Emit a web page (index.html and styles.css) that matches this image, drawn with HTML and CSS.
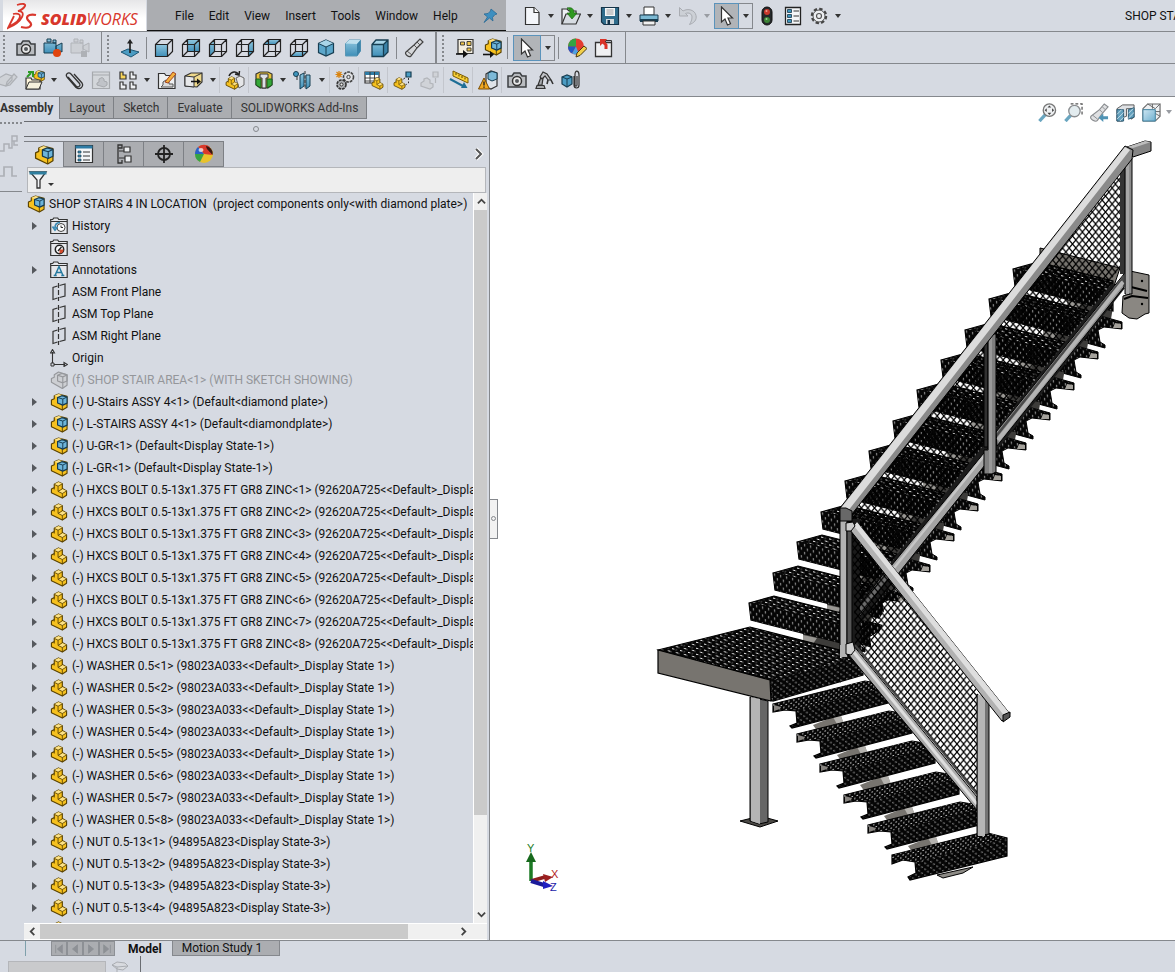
FILE: index.html
```html
<!DOCTYPE html>
<html lang="en">
<head>
<meta charset="utf-8">
<meta name="viewport" content="width=device-width, initial-scale=1">
<title>SOLIDWORKS</title>
<link rel="stylesheet" href="styles.css">
</head>
<body>
<svg class="sprite" aria-hidden="true">
  <defs>
    <linearGradient id="g-blue" x1="0" y1="0" x2="0" y2="1"><stop offset="0" stop-color="#8fc6de"/><stop offset="1" stop-color="#3f8fb8"/></linearGradient>
    <linearGradient id="g-pale" x1="0" y1="0" x2="1" y2="1"><stop offset="0" stop-color="#cfe6f2"/><stop offset="1" stop-color="#6fb0cf"/></linearGradient>
    <g id="wire"><path d="M1.5 6.500h12v12h-12zM6.500 1.500h12v12h-12zM1.500 6.500l5-5M13.500 6.500l5-5M13.500 18.500l5-5M1.500 18.500l5-5" fill="none" stroke="#222" stroke-width="1.200"/></g>
    <g id="lshape"><path d="M1 8.500L4 7V3.500L8.500 1l4 2v5l4.500 2.500V15l-4.500 3L1 12.500z" fill="#f6c11f" stroke="#5b4300" stroke-width="1.200" stroke-linejoin="round"/><path d="M4 3.500L8.500 1l4 2L8 5.500zM8 11l4.500-2.500 4.500 2-4.500 2.700z" fill="#fde286"/><path d="M4 3.500l4 2 4.500-2.500M8 5.500V11l4.500 2.200L17 10.500M8 11l4.500-2.700M12.500 13.200V18M4 7v2" fill="none" stroke="#5b4300" stroke-width=".9"/></g>
    <g id="cam"><path d="M1 6h4l2-3h6l2 3h4v11H1z" fill="#b9bcc0" stroke="#3c3f42" stroke-width="1.500"/><circle cx="10" cy="11" r="4.500" fill="#e8e8e8" stroke="#333" stroke-width="1.500"/><circle cx="10" cy="11" r="2" fill="#55595d"/></g>
  </defs>
  <symbol id="i-part" viewBox="0 0 18 19"><use href="#lshape"/></symbol>
  <symbol id="i-asm" viewBox="0 0 18 19"><path d="M1 7.500L4 6V3L8.500 1l9 2.500V15l-5 3L1 12.500z" fill="#f6c11f" stroke="#5b4300" stroke-width="1.200" stroke-linejoin="round"/><path d="M4 3l4.500-2 4 1.200L8 4.500z" fill="#fde286"/><path d="M12.500 12.500V18" stroke="#5b4300" stroke-width="1"/><path d="M7.500 4.700L12 2.800l5.500 1.400v6.500L13 12.800l-5.500-2.300z" fill="#6db5da" stroke="#143a52" stroke-width="1.200" stroke-linejoin="round"/><path d="M7.500 4.700l5.500 1.700 4.500-2.200M13 6.400v6" fill="none" stroke="#143a52"/></symbol>
  <symbol id="i-asm-off" viewBox="0 0 18 19"><g fill="#cdcfd3" stroke="#96989c" stroke-width="1.200" stroke-linejoin="round"><path d="M1 8l3-1.500V4l4.500-3 9 3v11l-5 3.500L1 12z"/><path d="M7.500 4.500L12 2.500l5.500 1.500v6.500L13 12.500l-5.500-2zM7.500 4.500l5.500 1.700 4.500-2M13 6.200v12" fill="none"/></g></symbol>
  <symbol id="i-history" viewBox="0 0 18 18"><path d="M.7 16.500v-14h2l1-1.500h4l1 1.500h8.500v14z" fill="#e6e8ec" stroke="#333" stroke-width="1.200"/><path d="M1 4.500h16" stroke="#333"/><circle cx="11" cy="10.500" r="4" fill="#fff" stroke="#444"/><path d="M11 8.500v2h2" fill="none" stroke="#333"/><path d="M10 5.500C6 5.500 5 8 5 11M2.500 9.500L5 13l2.500-3" fill="none" stroke="#3a8ab4" stroke-width="1.700"/></symbol>
  <symbol id="i-sensors" viewBox="0 0 18 18"><path d="M.7 16.500v-14h2l1-1.500h4l1 1.500h8.500v14z" fill="#e6e8ec" stroke="#333" stroke-width="1.200"/><path d="M1 4.500h16" stroke="#333"/><circle cx="9.500" cy="10.500" r="4.200" fill="#fff" stroke="#222" stroke-width="1.500"/><path d="M9.500 10.500l4 0a4 4 0 0 1-4 4z" fill="#d04a2c"/><path d="M8 12l3.500-4" stroke="#222" stroke-width="1.300"/></symbol>
  <symbol id="i-notes" viewBox="0 0 18 18"><path d="M.7 16.500v-14h2l1-1.500h4l1 1.500h8.500v14z" fill="#e6e8ec" stroke="#333" stroke-width="1.200"/><path d="M1 4.500h16" stroke="#333"/><path d="M5 14.500l4-9 4 9M6.500 11.500h5M3.700 14.500h3M11.300 14.500h3" fill="none" stroke="#24799f" stroke-width="1.500"/></symbol>
  <symbol id="i-plane" viewBox="0 0 18 18"><path d="M7.500 3L3 4.500v12L7.500 15M9.500 2.500L15 1v12l-5.500 1.500" fill="none" stroke="#333" stroke-width="1.200"/><path d="M8.500 0v18" stroke="#333" stroke-width="1.200" stroke-dasharray="5 2"/></symbol>
  <symbol id="i-origin" viewBox="0 0 18 18"><path d="M2.500 3v12M4 15.500h11M.5 4l2-3.500 2 3.500zM14 13.500l3.500 2-3.500 2z" fill="none" stroke="#333" stroke-width="1.100"/><path d="M1 14h3v3H1z" fill="#d6dae2" stroke="#333"/></symbol>
  <symbol id="i-new" viewBox="0 0 20 20"><path d="M3.500 1.500h8.500l5 5v12H3.500z" fill="#f4f6fa" stroke="#333" stroke-width="1.200"/><path d="M12 1.500v5h5" fill="#fff" stroke="#333" stroke-width="1.200"/></symbol>
  <symbol id="i-open" viewBox="0 0 20 20"><path d="M1 18V3h5l2 2h7v3" fill="#eef0f4" stroke="#333" stroke-width="1.200"/><path d="M1 18L5 8h14.500L15 18z" fill="#d7dce2" stroke="#333" stroke-width="1.200"/><path d="M6 2c5-1 7 1 7 5h3l-5 6-5-6h3c0-3-1-4-3-5z" fill="#2f9a20" stroke="#1a6610" stroke-width=".7"/></symbol>
  <symbol id="i-save" viewBox="0 0 20 20"><path d="M1.500 1.500h17v17H4l-2.500-2.500z" fill="#2f6c8c" stroke="#153348" stroke-width="1.200"/><path d="M5 2h10v8H5z" fill="#f3f6f8"/><path d="M6.500 4h7M6.500 6h7M6.500 8h7" stroke="#888" stroke-width=".8"/><path d="M6 13h8v5H6z" fill="#cfd8dd"/><path d="M7.500 14h2.500v4H7.500z" fill="#153348"/></symbol>
  <symbol id="i-print" viewBox="0 0 20 20"><path d="M5 1h10v8H5z" fill="#fff" stroke="#333"/><path d="M1 9h18v6H1z" fill="#7cb9d3" stroke="#1b3d50"/><path d="M1 13h18v3H1z" fill="#173e52"/><path d="M4 15h12v4H4z" fill="#f1f1f1" stroke="#333"/></symbol>
  <symbol id="i-undo" viewBox="0 0 20 20"><path d="M1.500 1.500v8.500H10L7.500 7.500C11 6 14 8 14 11s-1 5-2.500 7.500C16 17 19 14 18 9.500 17 4 10 2 5 5z" fill="#ccd0d6" stroke="#a9acb2" stroke-width="1"/></symbol>
  <symbol id="i-cursor" viewBox="0 0 20 20"><path d="M4.500 1v15l3.500-3 2.500 6 3-1.300-2.500-5.700h4.500z" fill="#fff" stroke="#333" stroke-width="1.200"/></symbol>
  <symbol id="i-light" viewBox="0 0 20 20"><rect x="5" y="1" width="10" height="18" rx="5" fill="#25282a" stroke="#111"/><circle cx="10" cy="6" r="3" fill="#c8382c"/><circle cx="10" cy="14" r="3" fill="#3c8436"/><circle cx="9.500" cy="5" r="1" fill="#f29c90"/><circle cx="9.500" cy="13" r="1" fill="#a0d49a"/></symbol>
  <symbol id="i-options" viewBox="0 0 20 20"><path d="M2.500 1.500h15v17h-15z" fill="#f4f6f8" stroke="#222" stroke-width="1.300"/><path d="M4.500 3.500h4v3h-4zM4.500 8.500h4v3h-4zM4.500 13.500h4v3h-4z" fill="#3f96bd" stroke="#153348" stroke-width=".8"/><path d="M10.500 5H16M10.500 10H16M10.500 15H16" stroke="#333" stroke-width="1.200"/></symbol>
  <symbol id="i-gear" viewBox="0 0 20 20"><circle cx="10" cy="10" r="7" fill="none" stroke="#444" stroke-width="2.500" stroke-dasharray="3.300 2.200"/><circle cx="10" cy="10" r="6" fill="#eceef1" stroke="#555"/><circle cx="10" cy="10" r="2.500" fill="none" stroke="#555" stroke-width="1.200"/></symbol>
  <symbol id="i-pin" viewBox="0 0 16 16"><path d="M9 1l6 5-2 .5-2.500 3 .5 3.500-3.500-3L2 14.500 5.500 9 2 6l4-.5L8.500 3z" fill="#3d8fc0" stroke="#2a6a94" stroke-width=".8"/></symbol>
  <symbol id="i-camera" viewBox="0 0 20 20"><use href="#cam"/></symbol>
  <symbol id="i-record" viewBox="0 0 20 20"><path d="M4 1h4v3H4zM10 2h3v3h-3zM1 5h12v10H1zM13 8l6-3v9l-6-3z" fill="url(#g-blue)" stroke="#173e52"/><circle cx="14" cy="15" r="4" fill="#e0440e"/></symbol>
  <symbol id="i-record-off" viewBox="0 0 20 20"><path d="M4 1h4v3H4zM10 2h3v3h-3zM1 5h12v10H1zM13 8l6-3v9l-6-3z" fill="#cdd0d5" stroke="#b0b3b8"/><path d="M11 13h6v6h-6z" fill="#aeb1b6"/></symbol>
  <symbol id="i-normal" viewBox="0 0 20 20"><path d="M1 14l7-3 11 3-8 5z" fill="#4b9cc3" stroke="#1d5674"/><path d="M10 15V3" stroke="#222" stroke-width="1.700"/><path d="M7 5.500L10 1l3 4.500z" fill="#222"/></symbol>
  <symbol id="i-front" viewBox="0 0 20 20"><path d="M1.500 6.500h12v12h-12z" fill="url(#g-blue)"/><path d="M1.500 6.500h12v12h-12zM1.500 6.500l5-5h12v12l-5 5M13.500 6.500l5-5" fill="none" stroke="#222" stroke-width="1.200"/></symbol>
  <symbol id="i-back" viewBox="0 0 20 20"><path d="M6.500 1.500h12v12h-12z" fill="url(#g-blue)"/><use href="#wire"/></symbol>
  <symbol id="i-left" viewBox="0 0 20 20"><path d="M1.500 6.500l5-5v12l-5 5z" fill="url(#g-blue)"/><use href="#wire"/></symbol>
  <symbol id="i-right" viewBox="0 0 20 20"><path d="M13.500 6.500l5-5v12l-5 5z" fill="url(#g-blue)"/><use href="#wire"/></symbol>
  <symbol id="i-top" viewBox="0 0 20 20"><path d="M1.500 6.500l5-5h12l-5 5z" fill="url(#g-blue)"/><use href="#wire"/></symbol>
  <symbol id="i-bottom" viewBox="0 0 20 20"><path d="M1.500 18.500l5-5h12l-5 5z" fill="url(#g-blue)"/><use href="#wire"/></symbol>
  <symbol id="i-iso" viewBox="0 0 20 20"><path d="M10 2l7.500 3.500v9L10 18l-7.500-3.500v-9z" fill="#5ba6ca" stroke="#173e52" stroke-width="1.200"/><path d="M2.500 5.500L10 2l7.500 3.500L10 9z" fill="#a9d5e8"/><path d="M2.500 5.500L10 9l7.500-3.500M10 9v9" fill="none" stroke="#173e52"/></symbol>
  <symbol id="i-trimetric" viewBox="0 0 20 20"><path d="M2.500 5.500L6 2h11.500v11L14 18H2.500z" fill="url(#g-blue)" stroke="#5b98b6"/><path d="M2.500 5.500L6 2h11.500L14 6z" fill="#bfe0ee"/><path d="M14 6v12l3.500-5V2z" fill="#3a82a8"/></symbol>
  <symbol id="i-solid" viewBox="0 0 20 20"><path d="M2 6.500L6 2h12v12l-4.500 4.500H2z" fill="url(#g-blue)"/><path d="M2 6.500L6 2h12l-4.500 4.500z" fill="#a9d5e8"/><path d="M13.500 6.500L18 2v12l-4.500 4.500z" fill="#3a82a8"/><path d="M2 6.500L6 2h12v12l-4.500 4.500H2zM2 6.500h11.500v12M13.500 6.500L18 2" fill="none" stroke="#173e52" stroke-width="1.300"/></symbol>
  <symbol id="i-torch" viewBox="0 0 20 20"><path d="M2 14l8-7 6-6 3 3-6 6-6 8c-2 2-7-2-5-4z" fill="#d5d7da" stroke="#444" stroke-width="1.200"/><path d="M10 7l3 3M13 4l3 3M3 13l5 4" stroke="#555"/></symbol>
  <symbol id="i-scheme" viewBox="0 0 20 20"><path d="M3 1.500h15v14H3z" fill="#f5efe0" stroke="#333" stroke-width="1.200"/><path d="M5.500 4h4v3h-4zM12 3.500h4v4h-4zM12 10h4v3h-4z" fill="#f0c64a" stroke="#333" stroke-width=".9"/><path d="M1 16h8" stroke="#111" stroke-width="1.600"/><path d="M8 12l5 4-5 4z" fill="#111"/></symbol>
  <symbol id="i-asm-go" viewBox="0 0 20 20"><use href="#i-asm" x="2" width="18" height="18"/><path d="M1 16.500h8" stroke="#111" stroke-width="1.600"/><path d="M8 13l4 3.500-4 3.500z" fill="#111"/></symbol>
  <symbol id="i-paint" viewBox="0 0 20 20"><circle cx="9" cy="8.500" r="8" fill="#e33b2e"/><path d="M9 .5a8 8 0 0 0-8 8h8z" fill="#35a343"/><path d="M1 8.500a8 8 0 0 0 4 7l4-7z" fill="#2458c4"/><path d="M9 8.500l-4 7a8 8 0 0 0 7 .5z" fill="#4fa0e0"/><path d="M9 19l1-4 7-7 3 2.500-7 7z" fill="#f2cf4a" stroke="#4b3a10"/></symbol>
  <symbol id="i-export" viewBox="0 0 20 20"><path d="M1.500 4.500h16v14h-16z" fill="#eff0f2" stroke="#333" stroke-width="1.300"/><path d="M11.500 2.500v3.500M11.500 2.500h6v2" fill="none" stroke="#333"/><path d="M6 1h7l-2 2.500 2.500 3V11h-3V7.500L8.500 5.500 6 8z" fill="#d93327"/></symbol>
  <symbol id="i-edit-off" viewBox="0 0 20 20"><path d="M1 8l7-4 6 2v4l-6 6-7-2zM8 16l1-4 7-8 3 3-7 8z" fill="#cfd2d7" stroke="#adb0b5" stroke-width="1.200"/></symbol>
  <symbol id="i-insert" viewBox="0 0 20 20"><use href="#i-asm" x="8" width="12" height="12"/><path d="M1 19V8h5l1 2h8v9z" fill="#fff6dc" stroke="#333" stroke-width="1.200"/><path d="M1 19l3-7h13l-3 7z" fill="#f6f1dc" stroke="#333"/><path d="M2 7l4-4M3 2h5v5" fill="none" stroke="#2c9a24" stroke-width="2"/></symbol>
  <symbol id="i-clip" viewBox="0 0 20 20"><path d="M4 7l8 9c2 2 5 0 3.500-2.500L7 4C4.500 1.500 1 4 3 7l9 10.500c4 3 8-1 6-4.500L10 4" fill="none" stroke="#333" stroke-width="1.300"/></symbol>
  <symbol id="i-window-off" viewBox="0 0 20 20"><path d="M1.500 2h17v16.500h-17z" fill="#d3d6da" stroke="#a6a9ad" stroke-width="1.200"/><path d="M1.500 5h17M6 13l2-1V9l3-1.500L13 9v2l3 1v3l-3 2-7-2z" fill="#c0c3c8" stroke="#a6a9ad"/></symbol>
  <symbol id="i-pattern" viewBox="0 0 20 20"><path d="M2 2h3v3h3v4H2z" fill="#f7d45a" stroke="#333" stroke-width="1.200"/><path d="M12 2h3v3h3v4h-6zM2 12h3v3h3v4H2zM12 12h3v3h3v4h-6z" fill="#eef0f3" stroke="#333" stroke-width="1.200"/></symbol>
  <symbol id="i-smart" viewBox="0 0 20 20"><path d="M1.500 18.500v-15h6l1.500 2h9v13z" fill="#eef0f2" stroke="#333" stroke-width="1.200"/><path d="M4 17l2-2v-3l3-2 3 2v2h4v3z" fill="#ddd" stroke="#555"/><path d="M8 12l8-10 3 2-8 9z" fill="#f3b13c" stroke="#a4441f"/></symbol>
  <symbol id="i-move" viewBox="0 0 20 20"><path d="M1 6l6-3h11v9l-5 5-12-1z" fill="#efd98c" stroke="#333" stroke-width="1.200"/><path d="M10 7l8-4" fill="none" stroke="#333"/><path d="M1 6l9 1v10l-9-1z" fill="#e7e8ea" stroke="#333"/><path d="M7 11.500h7" stroke="#111" stroke-width="1.500"/><path d="M13 8.500l4 3-4 3z" fill="#111"/></symbol>
  <symbol id="i-rotate" viewBox="0 0 20 20"><path d="M11 8l4-2 4 2v7l-5 3z" fill="#e5e6e8" stroke="#666"/><use href="#i-part" y="6" width="14" height="14"/><path d="M4 6c2-5 8-5 9-2M10 4l4 1 .5-4" fill="none" stroke="#222" stroke-width="1.500"/></symbol>
  <symbol id="i-hidden" viewBox="0 0 20 20"><path d="M2 4l4-2h8l4 2v11l-4 3H6l-4-3z" fill="#e9c43d" stroke="#333" stroke-width="1.200"/><path d="M2 9h5v9l-5-3zM18 9h-5v9l5-3z" fill="#35a838" stroke="#1c5c1e"/><path d="M6 4h8v4h-2v10H8V8H6z" fill="#dfe1e4" stroke="#333"/></symbol>
  <symbol id="i-mirror" viewBox="0 0 20 20"><circle cx="3" cy="4" r="2.500" fill="#3f96bd" stroke="#173e52"/><path d="M4 6v4" stroke="#333"/><path d="M7 5l4-2v13l-4 3zM13 5h4v11l-4 3z" fill="url(#g-blue)" stroke="#173e52"/><path d="M12 1v18" stroke="#333" stroke-dasharray="3 1.500"/></symbol>
  <symbol id="i-gears" viewBox="0 0 20 20"><path d="M4 1v7M.500 4.500h7M1.500 2l5 5M6.500 2l-5 5" stroke="#d9830f" stroke-width="1.200"/><circle cx="13.500" cy="7" r="5" fill="#e2e3e6" stroke="#444" stroke-width="1.600" stroke-dasharray="2.800 .8"/><circle cx="13.500" cy="7" r="1.700" fill="none" stroke="#444"/><circle cx="6.500" cy="14.500" r="4.500" fill="#aeb1b5" stroke="#333" stroke-width="1.600" stroke-dasharray="2.800 .8"/><circle cx="6.500" cy="14.500" r="1.500" fill="#eee" stroke="#333"/></symbol>
  <symbol id="i-bom" viewBox="0 0 20 20"><path d="M1 2h14v11H1z" fill="#fff" stroke="#333" stroke-width="1.200"/><path d="M1 2h14v3H1z" fill="#2f7ca5"/><path d="M1 8h14M1 11h14M6 2v11M10.500 2v11" stroke="#333" stroke-width=".9"/><use href="#i-part" x="7" y="7" width="13" height="13"/></symbol>
  <symbol id="i-explode" viewBox="0 0 20 20"><use href="#i-part" y="7" width="13" height="13"/><path d="M13 2h5v5h-5z" fill="#4b9cc3" stroke="#173e52" stroke-width="1.200"/><path d="M12 8l-3 2M15.500 8v5l-3 2" fill="none" stroke="#333" stroke-dasharray="2 1.500"/></symbol>
  <symbol id="i-explode-off" viewBox="0 0 20 20"><path d="M1 13l3-2V9l3-1 3 2v3l3 1v3l-3 2-9-3zM13 2h5v5h-5zM15.500 8v5" fill="#d0d3d8" stroke="#b2b5ba" stroke-width="1.200"/></symbol>
  <symbol id="i-measure" viewBox="0 0 20 20"><path d="M4 1l15 7v5L4 6z" fill="#f7cf35" stroke="#7a5a00"/><path d="M7 3v2M10 4.500v2M13 6v2M16 7.500v2" stroke="#5b4300"/><path d="M1 9l13 7" stroke="#1e6e96" stroke-width="2"/><path d="M12 18l6.500 0-3.500-6z" fill="#1e6e96"/></symbol>
  <symbol id="i-interfere" viewBox="0 0 20 20"><path d="M8 4l5-3 6 2v13l-6 3-5-2z" fill="#dfe3e8" stroke="#333" stroke-width="1.200"/><path d="M10 3l4-1.500 5 1.500v6l-5 2-4-2z" fill="#7cb9d8" stroke="#173e52"/><path d="M6 8l5.500 11H.500z" fill="#f3a81f" stroke="#7a4b00"/><path d="M6 11.500v4M6 16.500v1.200" stroke="#222" stroke-width="1.400"/></symbol>
  <symbol id="i-robot" viewBox="0 0 20 20"><path d="M2 18.500h9l-1-3H3zM4 15l3-8 2 1-1 7z" fill="#a7aaae" stroke="#333" stroke-width="1.200"/><path d="M6 7L9 2l4 2 4 6h-3l-3-4-3 3z" fill="#c3c5c9" stroke="#333" stroke-width="1.200"/><path d="M14 10l-1 4M17 10l2 4" stroke="#333" stroke-width="1.600"/></symbol>
  <symbol id="i-cubeclip" viewBox="0 0 20 20"><path d="M1 7l5-2 5 2v7l-5 3-5-3z" fill="#4b9cc3" stroke="#173e52" stroke-width="1.200"/><path d="M1 7l5 2 5-2M6 9v8" fill="none" stroke="#173e52"/><path d="M13 6v9c0 4 5 4 5 0V5c0-5-4-5-4-1v11c0 1.500 2 1.500 2 0V6" fill="none" stroke="#333" stroke-width="1.200"/></symbol>
  <symbol id="i-zoomfit" viewBox="0 0 20 20"><path d="M1.500 19L8 12" stroke="#6aa6c0" stroke-width="3.500"/><circle cx="12" cy="7.500" r="6.500" fill="#eef0f2" stroke="#777" stroke-width="1.400"/><path d="M12 2.500l2 2.200h-4zM12 12.500l2-2.200h-4zM7 7.500l2.200-2v4zM17 7.500l-2.200-2v4z" fill="#444"/></symbol>
  <symbol id="i-zoomarea" viewBox="0 0 20 20"><path d="M7 1h12v13" fill="none" stroke="#555" stroke-width="1.300" stroke-dasharray="3 2"/><path d="M1.500 19L7 13" stroke="#6aa6c0" stroke-width="3.500"/><circle cx="11" cy="8.500" r="6" fill="#e3ecef" stroke="#8a8d90" stroke-width="1.400"/></symbol>
  <symbol id="i-prev" viewBox="0 0 20 20"><path d="M1 14l9-7 5-6 4 3-6 7-5 7c-2 3-9-1-7-4z" fill="#dfe0e2" stroke="#8a8d90" stroke-width="1.200"/><path d="M10 7l3 3M13 4l3 3M3 13l5 4" stroke="#8a8d90"/><path d="M19 14h-5v-3l-5 4.500 5 4.500v-3h5z" fill="#4f93b4"/></symbol>
  <symbol id="i-section" viewBox="0 0 20 20"><path d="M1 6l6-4h12v13l-3 2V6h-5v8l-3 1-1 4H1z" fill="#dfe1e4" stroke="#555"/><path d="M1 7h7v12H1zM13 7l6-2v10l-6 2z" fill="#62a0bd" stroke="#2a5c76"/><path d="M1 12l5-5M1 17l7-7M4 19l4-4M13 11l5-5M13 16l6-6" stroke="#d4e6ee" stroke-width=".9"/></symbol>
  <symbol id="i-orient" viewBox="0 0 20 20"><path d="M1 6l5-5h13v13l-5 5H1z" fill="#eef0f2" stroke="#666" stroke-width="1.200"/><path d="M6 1l8 5M19 1l-5 5M19 14l-5-3M11 1v5M14 9h5" stroke="#666"/><path d="M1 7h13v12H1z" fill="url(#g-pale)" stroke="#3a7d9c"/></symbol>
  <symbol id="i-props" viewBox="0 0 20 20"><path d="M1.500 1.500h17v17h-17z" fill="#f4f6f8" stroke="#333" stroke-width="1.200"/><path d="M1.500 1.500h17v3h-17z" fill="#2f7ca5"/><path d="M4 7h3v2H4zM4 11h3v2H4zM4 15h3v2H4z" fill="#3f96bd" stroke="#173e52" stroke-width=".7"/><path d="M9 8h7M9 12h7M9 16h7" stroke="#333"/></symbol>
  <symbol id="i-config" viewBox="0 0 20 20"><path d="M4 1h4v3H4zM4 1v18h4v-3" fill="none" stroke="#333" stroke-width="1.300"/><path d="M10 3h6v5h-6zM11 12h6v6h-6zM5 7h5M5 14h6" fill="#eceef0" stroke="#333" stroke-width="1.200"/></symbol>
  <symbol id="i-target" viewBox="0 0 20 20"><circle cx="10" cy="10" r="6" fill="none" stroke="#222" stroke-width="1.800"/><path d="M10 1v18M1 10h18" stroke="#222" stroke-width="1.800"/></symbol>
  <symbol id="i-ball" viewBox="0 0 20 20"><circle cx="10" cy="10" r="9" fill="#e8c22c"/><path d="M10 10L4 3a9 9 0 0 1 12 0z" fill="#d8392c"/><path d="M10 10H1a9 9 0 0 1 3-7z" fill="#2b60c8"/><path d="M10 10H1a9 9 0 0 0 5 8z" fill="#37a344"/><path d="M12 2c5 1 7.500 5 6.500 9L13 6z" fill="#3a1612"/><path d="M10 10l2-6 6.500 7z" fill="#d8392c"/><ellipse cx="7" cy="6" rx="2.500" ry="2" fill="#fff" opacity=".7"/></symbol>
  <symbol id="i-filter" viewBox="0 0 20 20"><path d="M2 2h16l-6 8v8H9v-8z" fill="#f2f4f6" stroke="#333" stroke-width="1.300"/><path d="M1.500 1.500h17v3h-17z" fill="#2f7f9f"/></symbol>
</svg>

<header class="titlebar">
  <div class="brand">
    <svg class="brand-mark" viewBox="0 0 30 28" aria-hidden="true"><path d="M10 3c6-2 9-1 8 1-1 2-4 4-7 5 4 0 6 2 4 6-2 4-7 8-14 11 2-4 4-8 6-12M3 24C9 21 13 17 13 14c0-2-3-3-7-2" fill="none" stroke="#d8372c" stroke-width="1.800"/><path d="M29 13c-5-1-9 0-9 3s5 4 4 7-6 3-10 2" fill="none" stroke="#d8372c" stroke-width="2.200"/></svg>
    <span class="brand-name"><b>SOLID</b>WORKS</span>
  </div>
  <nav class="menu">
    <button>File</button><button>Edit</button><button>View</button><button>Insert</button><button>Tools</button><button>Window</button><button>Help</button>
    <button class="pin" aria-label="Pin menu"><svg><use href="#i-pin"/></svg></button>
  </nav>
  <div class="tools tools-main">
    <button class="tool" aria-label="New"><svg><use href="#i-new"/></svg></button><button class="drop" aria-label="New options"></button>
    <button class="tool" aria-label="Open"><svg><use href="#i-open"/></svg></button><button class="drop" aria-label="Open options"></button>
    <button class="tool" aria-label="Save"><svg><use href="#i-save"/></svg></button><button class="drop" aria-label="Save options"></button>
    <button class="tool" aria-label="Print"><svg><use href="#i-print"/></svg></button><button class="drop" aria-label="Print options"></button>
    <button class="tool" aria-label="Undo" disabled><svg><use href="#i-undo"/></svg></button><button class="drop" aria-label="Undo options" disabled></button>
    <div class="split"><button class="tool" aria-label="Select"><svg><use href="#i-cursor"/></svg></button><button class="drop" aria-label="Select options"></button></div>
    <button class="tool" aria-label="Rebuild"><svg><use href="#i-light"/></svg></button>
    <button class="tool" aria-label="File properties"><svg><use href="#i-options"/></svg></button>
    <button class="tool" aria-label="Options"><svg><use href="#i-gear"/></svg></button><button class="drop" aria-label="Options menu"></button>
  </div>
  <span class="doc-title">SHOP STA</span>
</header>

<div class="tools bar">
  <i class="grip"></i>
  <button class="tool" aria-label="Screen capture"><svg><use href="#i-camera"/></svg></button>
  <button class="tool" aria-label="Record video"><svg><use href="#i-record"/></svg></button>
  <button class="tool" aria-label="Stop video" disabled><svg><use href="#i-record-off"/></svg></button>
  <i class="edge"></i><i class="grip"></i>
  <button class="tool" aria-label="Normal to"><svg><use href="#i-normal"/></svg></button>
  <i class="rule"></i>
  <button class="tool" aria-label="Front"><svg><use href="#i-front"/></svg></button>
  <button class="tool" aria-label="Back"><svg><use href="#i-back"/></svg></button>
  <button class="tool" aria-label="Left"><svg><use href="#i-left"/></svg></button>
  <button class="tool" aria-label="Right"><svg><use href="#i-right"/></svg></button>
  <button class="tool" aria-label="Top"><svg><use href="#i-top"/></svg></button>
  <button class="tool" aria-label="Bottom"><svg><use href="#i-bottom"/></svg></button>
  <button class="tool" aria-label="Isometric"><svg><use href="#i-iso"/></svg></button>
  <button class="tool" aria-label="Trimetric"><svg><use href="#i-trimetric"/></svg></button>
  <button class="tool" aria-label="Dimetric"><svg><use href="#i-solid"/></svg></button>
  <i class="rule"></i>
  <button class="tool" aria-label="View selector"><svg><use href="#i-torch"/></svg></button>
  <i class="edge thick"></i><i class="grip"></i>
  <button class="tool" aria-label="Make drawing"><svg><use href="#i-scheme"/></svg></button>
  <button class="tool" aria-label="Make assembly"><svg><use href="#i-asm-go"/></svg></button>
  <i class="rule tight"></i>
  <div class="split wide"><button class="tool" aria-label="Select"><svg><use href="#i-cursor"/></svg></button><button class="drop" aria-label="Select options"></button></div>
  <i class="rule tight"></i>
  <button class="tool" aria-label="Edit appearance"><svg><use href="#i-paint"/></svg></button>
  <button class="tool" aria-label="Export"><svg><use href="#i-export"/></svg></button>
  <i class="edge"></i>
</div>

<div class="tools bar assembly-bar">
  <button class="tool" aria-label="Edit component" disabled><svg><use href="#i-edit-off"/></svg></button>
  <button class="tool" aria-label="Insert components"><svg><use href="#i-insert"/></svg></button><button class="drop" aria-label="Insert options"></button>
  <button class="tool" aria-label="Mate"><svg><use href="#i-clip"/></svg></button>
  <button class="tool" aria-label="Component preview" disabled><svg><use href="#i-window-off"/></svg></button>
  <button class="tool" aria-label="Linear pattern"><svg><use href="#i-pattern"/></svg></button><button class="drop" aria-label="Pattern options"></button>
  <button class="tool" aria-label="Smart fasteners"><svg><use href="#i-smart"/></svg></button>
  <button class="tool" aria-label="Move component"><svg><use href="#i-move"/></svg></button><button class="drop" aria-label="Move options"></button>
  <i class="faint"></i>
  <button class="tool" aria-label="Replace"><svg><use href="#i-rotate"/></svg></button>
  <i class="faint"></i>
  <button class="tool" aria-label="Assembly features"><svg><use href="#i-hidden"/></svg></button><button class="drop" aria-label="Feature options"></button>
  <button class="tool" aria-label="Reference geometry"><svg><use href="#i-mirror"/></svg></button><button class="drop" aria-label="Geometry options"></button>
  <i class="faint roomy"></i>
  <button class="tool" aria-label="Motion study"><svg><use href="#i-gears"/></svg></button>
  <i class="faint"></i>
  <button class="tool" aria-label="Bill of materials"><svg><use href="#i-bom"/></svg></button>
  <i class="faint"></i>
  <button class="tool" aria-label="Exploded view"><svg><use href="#i-explode"/></svg></button>
  <button class="tool" aria-label="Explode line" disabled><svg><use href="#i-explode-off"/></svg></button>
  <i class="faint"></i>
  <button class="tool" aria-label="Measure"><svg><use href="#i-measure"/></svg></button>
  <i class="faint"></i>
  <button class="tool" aria-label="Interference detection"><svg><use href="#i-interfere"/></svg></button>
  <i class="faint"></i>
  <button class="tool" aria-label="Snapshot"><svg><use href="#i-camera"/></svg></button>
  <button class="tool" aria-label="Large assembly"><svg><use href="#i-robot"/></svg></button>
  <button class="tool" aria-label="Mate controller"><svg><use href="#i-cubeclip"/></svg></button>
</div>

<main class="workspace">
  <aside class="side">
    <div class="commands"><button class="on">Assembly</button><button>Layout</button><button>Sketch</button><button>Evaluate</button><button>SOLIDWORKS Add-Ins</button></div>
    <div class="side-body">
      <div class="dock">
        <svg viewBox="0 0 20 20" aria-hidden="true"><path d="M0 17h4v-7h5v4h3V7h2v4h4M12 2h5v5h-5z" fill="none" stroke="#adb0b6" stroke-width="1.500"/></svg>
        <svg viewBox="0 0 20 20" aria-hidden="true"><path d="M0 14h4V5h8v9h5" fill="none" stroke="#adb0b6" stroke-width="1.700"/></svg>
      </div>
      <div class="manager">
        <div class="splitter"><i></i></div>
        <div class="views">
          <button class="on" aria-label="Feature tree"><svg><use href="#i-asm"/></svg></button><button aria-label="Properties"><svg><use href="#i-props"/></svg></button><button aria-label="Configurations"><svg><use href="#i-config"/></svg></button><button aria-label="Dimensions"><svg><use href="#i-target"/></svg></button><button aria-label="Display"><svg><use href="#i-ball"/></svg></button>
          <button class="more" aria-label="More tabs"><svg viewBox="0 0 12 14"><path d="M3 2l5 5-5 5" fill="none" stroke="#fff" stroke-width="4"/><path d="M3 2l5 5-5 5" fill="none" stroke="#555" stroke-width="2"/></svg></button>
        </div>
        <div class="filter"><button aria-label="Filter"><svg><use href="#i-filter"/></svg></button><input type="text" aria-label="Filter tree"></div>
        <div class="scroller">
          <ul class="tree">
            <li class="root"><svg><use href="#i-asm"/></svg>SHOP STAIRS 4 IN LOCATION&nbsp; (project components only&lt;with diamond plate&gt;)</li>
            <li class="open"><svg><use href="#i-history"/></svg>History</li>
            <li><svg><use href="#i-sensors"/></svg>Sensors</li>
            <li class="open"><svg><use href="#i-notes"/></svg>Annotations</li>
            <li><svg><use href="#i-plane"/></svg>ASM Front Plane</li>
            <li><svg><use href="#i-plane"/></svg>ASM Top Plane</li>
            <li><svg><use href="#i-plane"/></svg>ASM Right Plane</li>
            <li><svg><use href="#i-origin"/></svg>Origin</li>
            <li class="off"><svg><use href="#i-asm-off"/></svg>(f) SHOP STAIR AREA&lt;1&gt; (WITH SKETCH SHOWING)</li>
            <li class="open"><svg><use href="#i-asm"/></svg>(-) U-Stairs ASSY 4&lt;1&gt; (Default&lt;diamond plate&gt;)</li>
            <li class="open"><svg><use href="#i-asm"/></svg>(-) L-STAIRS ASSY 4&lt;1&gt; (Default&lt;diamondplate&gt;)</li>
            <li class="open"><svg><use href="#i-asm"/></svg>(-) U-GR&lt;1&gt; (Default&lt;Display State-1&gt;)</li>
            <li class="open"><svg><use href="#i-asm"/></svg>(-) L-GR&lt;1&gt; (Default&lt;Display State-1&gt;)</li>
            <li class="open"><svg><use href="#i-part"/></svg>(-) HXCS BOLT 0.5-13x1.375 FT GR8 ZINC&lt;1&gt; (92620A725&lt;&lt;Default&gt;_Display</li>
            <li class="open"><svg><use href="#i-part"/></svg>(-) HXCS BOLT 0.5-13x1.375 FT GR8 ZINC&lt;2&gt; (92620A725&lt;&lt;Default&gt;_Display</li>
            <li class="open"><svg><use href="#i-part"/></svg>(-) HXCS BOLT 0.5-13x1.375 FT GR8 ZINC&lt;3&gt; (92620A725&lt;&lt;Default&gt;_Display</li>
            <li class="open"><svg><use href="#i-part"/></svg>(-) HXCS BOLT 0.5-13x1.375 FT GR8 ZINC&lt;4&gt; (92620A725&lt;&lt;Default&gt;_Display</li>
            <li class="open"><svg><use href="#i-part"/></svg>(-) HXCS BOLT 0.5-13x1.375 FT GR8 ZINC&lt;5&gt; (92620A725&lt;&lt;Default&gt;_Display</li>
            <li class="open"><svg><use href="#i-part"/></svg>(-) HXCS BOLT 0.5-13x1.375 FT GR8 ZINC&lt;6&gt; (92620A725&lt;&lt;Default&gt;_Display</li>
            <li class="open"><svg><use href="#i-part"/></svg>(-) HXCS BOLT 0.5-13x1.375 FT GR8 ZINC&lt;7&gt; (92620A725&lt;&lt;Default&gt;_Display</li>
            <li class="open"><svg><use href="#i-part"/></svg>(-) HXCS BOLT 0.5-13x1.375 FT GR8 ZINC&lt;8&gt; (92620A725&lt;&lt;Default&gt;_Display</li>
            <li class="open"><svg><use href="#i-part"/></svg>(-) WASHER 0.5&lt;1&gt; (98023A033&lt;&lt;Default&gt;_Display State 1&gt;)</li>
            <li class="open"><svg><use href="#i-part"/></svg>(-) WASHER 0.5&lt;2&gt; (98023A033&lt;&lt;Default&gt;_Display State 1&gt;)</li>
            <li class="open"><svg><use href="#i-part"/></svg>(-) WASHER 0.5&lt;3&gt; (98023A033&lt;&lt;Default&gt;_Display State 1&gt;)</li>
            <li class="open"><svg><use href="#i-part"/></svg>(-) WASHER 0.5&lt;4&gt; (98023A033&lt;&lt;Default&gt;_Display State 1&gt;)</li>
            <li class="open"><svg><use href="#i-part"/></svg>(-) WASHER 0.5&lt;5&gt; (98023A033&lt;&lt;Default&gt;_Display State 1&gt;)</li>
            <li class="open"><svg><use href="#i-part"/></svg>(-) WASHER 0.5&lt;6&gt; (98023A033&lt;&lt;Default&gt;_Display State 1&gt;)</li>
            <li class="open"><svg><use href="#i-part"/></svg>(-) WASHER 0.5&lt;7&gt; (98023A033&lt;&lt;Default&gt;_Display State 1&gt;)</li>
            <li class="open"><svg><use href="#i-part"/></svg>(-) WASHER 0.5&lt;8&gt; (98023A033&lt;&lt;Default&gt;_Display State 1&gt;)</li>
            <li class="open"><svg><use href="#i-part"/></svg>(-) NUT 0.5-13&lt;1&gt; (94895A823&lt;Display State-3&gt;)</li>
            <li class="open"><svg><use href="#i-part"/></svg>(-) NUT 0.5-13&lt;2&gt; (94895A823&lt;Display State-3&gt;)</li>
            <li class="open"><svg><use href="#i-part"/></svg>(-) NUT 0.5-13&lt;3&gt; (94895A823&lt;Display State-3&gt;)</li>
            <li class="open"><svg><use href="#i-part"/></svg>(-) NUT 0.5-13&lt;4&gt; (94895A823&lt;Display State-3&gt;)</li>
            <li class="open"><svg><use href="#i-part"/></svg></li>
          </ul>
          <div class="vbar"><button aria-label="Scroll up"><svg viewBox="0 0 10 10"><path d="M1 7l4-4 4 4" fill="none" stroke="#444" stroke-width="2"/></svg></button><i></i><button aria-label="Scroll down"><svg viewBox="0 0 10 10"><path d="M1 3l4 4 4-4" fill="none" stroke="#444" stroke-width="2"/></svg></button></div>
        </div>
        <div class="hbar"><button aria-label="Scroll left"><svg viewBox="0 0 10 10"><path d="M7 1L3 5l4 4" fill="none" stroke="#444" stroke-width="2"/></svg></button><i></i><button aria-label="Scroll right"><svg viewBox="0 0 10 10"><path d="M3 1l4 4-4 4" fill="none" stroke="#444" stroke-width="2"/></svg></button></div>
      </div>
    </div>
  </aside>

  <section class="viewport">
    <svg class="model" viewBox="490 97 685 843" preserveAspectRatio="xMinYMin meet" role="img" aria-label="Staircase model">
      <defs>
        <pattern id="plate" width="8" height="6" patternUnits="userSpaceOnUse" patternTransform="skewY(13)"><path d="M0 0h8v6H0z" fill="#050505"/><path d="M0 1.500h2.200M4 4.500h2.200" stroke="#f0f0f0" stroke-width="1"/><path d="M3.500 2.500l1.500-1.300M7 5.500v-1.500" stroke="#858585" stroke-width=".8"/></pattern>
        <pattern id="face" width="6" height="8" patternUnits="userSpaceOnUse" patternTransform="skewY(14)"><path d="M0 0h6v8H0z" fill="#050505"/><path d="M1.500 0v2.500M4.500 4v2.500" stroke="#b8b8b8" stroke-width=".9"/></pattern>
        <pattern id="under" width="5" height="5" patternUnits="userSpaceOnUse" patternTransform="skewY(-13)"><path d="M0 0h5v5H0z" fill="#060606"/><path d="M0 1h1.500M2.500 3.500h1.500" stroke="#e0e0e0" stroke-width="1"/></pattern>
        <pattern id="riser" width="6" height="6" patternUnits="userSpaceOnUse" patternTransform="skewY(-14)"><path d="M0 0h6v6H0z" fill="#050505"/><path d="M0 1.500l2 1M3 4.500l2 1" stroke="#808080" stroke-width="1"/></pattern>
        <pattern id="mesh" width="6.600" height="8" patternUnits="userSpaceOnUse"><path d="M-1-1.200L7.600 9.200M7.600-1.200L-1 9.200" stroke="#000" stroke-width="1.250"/></pattern>
        <g id="up">
          <path d="M54 27l46 11 -2 12-44-13z" fill="#3d3c3a"/><path d="M54 32l14 3-4 6-10-3z" fill="#9a9894"/>
          <path d="M0 0l25-7 75 19v30L2 17z" fill="url(#plate)" stroke="#000" stroke-width="1.200"/>
          <path d="M0 0l3-1 97 25v18L2 17z" fill="url(#face)"/>
          <path d="M70 42l39 11v7l-18-2-6 3 2 12 5 3v3l-26-7z" fill="url(#face)" stroke="#000"/>
          <path d="M102 54l6 1v4h-8z" fill="#a5a29c"/>
        </g>
        <g id="low">
          <path d="M40 21l20-8 8-1 3 9-26 7z" fill="#77746f"/><path d="M60 13l8-1 3 8-6 2z" fill="#b4b2ae"/>
          <path d="M0 0l92-23 12 2 11 6v14L19 24l-2-2 7-3-1-12-11-1-12 2z" fill="url(#riser)" stroke="#000" stroke-width="1.200"/>
          <path d="M0 0l92-23 12 2 8 4L30 5l-18 1-12-2z" fill="url(#under)"/>
          <path d="M1 1l7 2-1 2-6 2z" fill="#85827e"/>
        </g>
      </defs>
      <!-- upper flight -->
      <path d="M1040 248l80 20-6 18-74-20z" fill="#77746f" stroke="#000"/>
      <use href="#up" x="1013" y="269"/><use href="#up" x="989" y="299"/><use href="#up" x="965" y="330"/><use href="#up" x="941" y="360"/><use href="#up" x="917" y="390"/><use href="#up" x="893" y="421"/><use href="#up" x="869" y="451"/><use href="#up" x="845" y="481"/><use href="#up" x="821" y="512"/><use href="#up" x="797" y="542"/><use href="#up" x="773" y="573"/><use href="#up" x="749" y="603"/>
      <path d="M1125 288l-276 350-2-20 264-334z" fill="#1c1c1c"/>
      <path d="M1060 250L1121 169v98l-18 23-250 318-8-90z" fill="url(#mesh)"/>
      <!-- open space under the lower guard -->
      <path d="M866 640l20-32 30-14-2 120-46-50z" fill="#fff"/>
      <path d="M856 632l14-10 22 6-1 6-14-2-8 5 2 10-20-6z" fill="url(#face)" stroke="#000"/>
      <!-- wall plate -->
      <path d="M1130 271l19 4v38l-4 1-8 5-8-1-7-5 1-17 7-2z" fill="#8a8782" stroke="#000"/>
      <path d="M1131 287l16 4M1124 299l8-3 16 2" fill="none" stroke="#000" stroke-width="2"/><circle cx="1142" cy="281" r="1.200"/><circle cx="1142" cy="304" r="1.200"/>
      <!-- bottom rail, upper guard -->
      <path d="M1124 274v13l-127 159-1-14z" fill="#8e8e8e" stroke="#000"/><path d="M1124 275v4L997 437v-4z" fill="#4a4a4a"/><path d="M1123 282L998 440" stroke="#b4b4b4" stroke-width="4"/>
      <path d="M989 447v13l-91 114-7-8z" fill="#a4a4a4" stroke="#000"/><path d="M987 452l-93 116" stroke="#c6c6c6" stroke-width="2.500"/>
      <path d="M889 578l-35 46-1-10 31-41z" fill="#6b6b6b" stroke="#000"/>
      <!-- posts, upper guard -->
      <path d="M1120 164h5v110h-5z" fill="#333"/><path d="M1125 158h7v136h-7z" fill="#8c8c8c" stroke="#000"/><path d="M1126 162h3v132h-3z" fill="#a7a7a7"/>
      <path d="M984 338h4v109h-4z" fill="#303030" stroke="#000"/><path d="M988 334h8v138l-4 2h-8v-24h4z" fill="#7f7f7f" stroke="#000"/><path d="M989 336h3v137h-3z" fill="#999"/>
      <path d="M852 519h8v130h-8z" fill="#1a1a1a"/><path d="M840 518h7v139h-7z" fill="#b2b2b2" stroke="#000"/><path d="M847 530h5v118h-5z" fill="#555" stroke="#000"/>
      <!-- top rail, upper guard -->
      <path d="M1127 147l18-6 6 1v9l-18 6z" fill="#858585" stroke="#000"/><path d="M1127 147l18-6 6 1-18 6z" fill="#bdbdbd"/>
      <path d="M1125 146l8 4-1 9L852 514l-12-6z" fill="#8a8a8a" stroke="#000"/><path d="M1125 147l5 3L848 511l-7-3z" fill="#dcdcdc"/>
      <path d="M840 508h6l6 3v10h-12z" fill="#686868" stroke="#000"/>
      <!-- landing -->
      <path d="M658 650l92-23 113 29v19l-90 26z" fill="url(#plate)" stroke="#000" stroke-width="1.200"/>
      <path d="M771 680l92-24v19l-90 26z" fill="url(#riser)"/>
      <path d="M658 650l112 30 1 21-113-28z" fill="#77746f" stroke="#000" stroke-width="1.200"/>
      <path d="M840 645h7v12h-7z" fill="#b2b2b2"/>
      <!-- support column -->
      <path d="M740 821l20-5 18 5-18 6z" fill="#4b4945" stroke="#000"/><path d="M750 697l18 4v121l-9 2-9-3z" fill="#666" stroke="#000"/><path d="M751 697l9 2v125l-9-3z" fill="#b4b4b4"/>
      <!-- lower flight -->
      <use href="#low" x="773" y="704"/><use href="#low" x="797" y="734"/><use href="#low" x="820" y="764"/><use href="#low" x="844" y="795"/><use href="#low" x="868" y="825"/>
      <path d="M937 875l36-8-10 6-20 5z" fill="#8d8b86" stroke="#000"/><path d="M892 855l92-23 23 6v18l-97 24-2-3 8-4-1-11-12-2-11 4z" fill="url(#riser)" stroke="#000" stroke-width="1.200"/><path d="M892 855l92-23 23 6-90 24-25-3z" fill="url(#under)"/>
      <!-- lower guard -->
      <path d="M868 655l109 137V690L890 610z" fill="#fff"/>
      <path d="M852 532l125 158v104L855 645z" fill="url(#mesh)"/>
      <path d="M853 645l124 152v13L848 654z" fill="#aaa" stroke="#000"/><path d="M852 650l125 154" stroke="#dedede" stroke-width="3"/><path d="M855 645l122 149" stroke="#444" stroke-width="2"/>
      <path d="M846 644l7-2 2 8-4 5-5-1z" fill="#d0d0d0" stroke="#000"/>
      <path d="M977 694l12 8v132l-12 2z" fill="#747474" stroke="#000"/><path d="M978 694l7 4v138h-7z" fill="#b6b6b6"/>
      <path d="M850 530l7-8 153 192-8 7z" fill="#b2b2b2" stroke="#000"/><path d="M857 522l-3 4 152 192 4-4z" fill="#dedede"/>
      <path d="M1003 715l7-3v5l-7 5z" fill="#555" stroke="#000"/><path d="M846 523l7-1 2 4-4 5h-5z" fill="#ccc" stroke="#000"/>
      <!-- axis triad -->
      <path d="M531 881v-20" stroke="#1d7a24" stroke-width="3.500"/><path d="M526 862l5-10 5 10z" fill="#17691d"/><path d="M531 881l14-4" stroke="#8f1d1d" stroke-width="3.500"/><path d="M543 874l10 3-8 5z" fill="#9c2020"/><path d="M531 881l13 4" stroke="#1b1b9a" stroke-width="4"/><path d="M543 881l10 5-10 3z" fill="#2222c0"/>
      <text x="527" y="852" fill="#1d7a24">Y</text><text x="551" y="878" fill="#b32222">X</text><text x="550" y="891" fill="#2222a8">Z</text>
    </svg>
    <div class="heads-up"><button aria-label="Zoom to fit"><svg><use href="#i-zoomfit"/></svg></button><button aria-label="Zoom to area"><svg><use href="#i-zoomarea"/></svg></button><button aria-label="Previous view"><svg><use href="#i-prev"/></svg></button><button aria-label="Section view"><svg><use href="#i-section"/></svg></button><button aria-label="View orientation"><svg><use href="#i-orient"/></svg></button><button class="drop" aria-label="Orientation options" disabled></button></div>
    <button class="handle" aria-label="Collapse panel"><i></i></button>
  </section>
</main>

<footer>
  <div class="sheets">
    <div class="nav"><button aria-label="First" disabled><svg viewBox="0 0 12 12"><path d="M2 1v10M10 1L4 6l6 5z"/></svg></button><button aria-label="Previous" disabled><svg viewBox="0 0 12 12"><path d="M9 1L3 6l6 5z"/></svg></button><button aria-label="Next" disabled><svg viewBox="0 0 12 12"><path d="M3 1l6 5-6 5z"/></svg></button><button aria-label="Last" disabled><svg viewBox="0 0 12 12"><path d="M10 1v10M2 1l6 5-6 5z"/></svg></button></div>
    <button class="model-tab">Model</button><button class="study-tab">Motion Study 1</button>
  </div>
  <div class="status"><i class="slot"></i><svg viewBox="0 0 20 12" aria-hidden="true"><path d="M2 5l5-3 8 1 3 3-5 4-6-1zM2 5l5 2 11-1M7 7v5" fill="#d9dbdf" stroke="#aaadb2"/></svg><i class="line"></i></div>
</footer>
</body>
</html>
```
FILE: styles.css
```css
*, *::before, *::after { box-sizing: border-box; }
body {
  margin: 0;
  height: 100vh;
  display: flex;
  flex-direction: column;
  overflow: hidden;
  background: #d6dae2;
  color: #111;
  font: 12px/16px Roboto, "Noto Sans", sans-serif;
}
button {
  margin: 0;
  padding: 0;
  border: 0;
  background: none;
  color: inherit;
  font: inherit;
  white-space: nowrap;
}
button svg { display: block; }
.sprite { position: absolute; width: 0; height: 0; }

/* title bar */
.titlebar {
  flex: none;
  display: flex;
  height: 32px;
  border-bottom: 1px solid #85888d;
}
.brand {
  display: flex;
  align-items: center;
  width: 143px;
  margin-left: 3px;
  padding-left: 4px;
  background: linear-gradient(#e6e6e8, #fff 60%);
}
.brand-mark { width: 30px; height: 28px; }
.brand-name {
  padding: 6px 0 0 4px;
  color: #d8372c;
  font-family: "Open Sans", sans-serif;
  font-size: 16px;
  font-style: italic;
}
.brand-name b { font-weight: 800; }
.menu {
  display: flex;
  align-items: center;
  gap: 15px;
  width: 359px;
  margin-left: 1px;
  padding: 2px 0 0 28px;
  background: #abadb1;
  border-bottom: 1px solid #111;
}
.pin { margin-left: auto; margin-right: 8px; }
.pin svg { width: 16px; height: 16px; }
.doc-title {
  width: 50px;
  margin-left: auto;
  line-height: 32px;
  white-space: nowrap;
}

/* toolbars */
.tools { display: flex; align-items: center; }
.tools-main { padding-left: 12px; }
.tool {
  flex: none;
  display: grid;
  place-items: center;
  width: 27px;
  height: 26px;
}
.tool svg { width: 20px; height: 20px; }
.tools-main .split ~ .tool { width: 26px; }
.drop {
  flex: none;
  display: grid;
  place-items: center;
  width: 12px;
  height: 26px;
}
.drop::before {
  content: "";
  border: 3px solid transparent;
  border-top: 4px solid #333;
  border-bottom: 0;
}
.drop:disabled::before { border-top-color: #999ca2; }
.split { display: flex; flex: none; margin: 0 1px; }
.split .tool { width: 25px; border: 1px solid #5b93bb; background: #b1b4b8; }
.split .drop { width: 14px; border: 1px solid #85888d; border-left: 0; }
.bar {
  flex: none;
  height: 32px;
  border-bottom: 1px solid #85888d;
}
.grip {
  flex: none;
  width: 2px;
  height: 26px;
  margin: 0 7px 0 3px;
  background: repeating-linear-gradient(#85888d 0 2px, transparent 2px 4px);
}
.edge {
  flex: none;
  width: 1px;
  height: 31px;
  margin-left: 8px;
  margin-right: 2px;
  background: #85888d;
}
.edge.thick { width: 2px; }
.rule {
  flex: none;
  width: 1px;
  height: 22px;
  margin: 0 3px;
  background: #85888d;
}
.rule.tight { margin: 0 4px 0 2px; }
.wide .tool { width: 28px; }
.assembly-bar { height: 33px; }
.assembly-bar > .tool:first-child { margin-left: -6px; }
.faint {
  flex: none;
  width: 1px;
  height: 26px;
  margin-right: 1px;
  background: #c3c6cd;
}
.faint.roomy { margin: 0 1px; }

/* side panel */
.workspace {
  flex: 1;
  min-height: 0;
  display: flex;
}
.side {
  flex: none;
  display: flex;
  flex-direction: column;
  width: 490px;
  border-right: 1px solid #85888d;
}
.commands { display: flex; height: 22px; flex: none; }
.commands button {
  padding: 0 8px 0 9px;
  border-right: 1px solid #7d8085;
  border-bottom: 1px solid #7d8085;
  background: #abadb1;
  color: #333;
}
.commands .on {
  padding: 0 6px 0 0;
  border-bottom: 0;
  background: none;
  font-weight: 700;
}
.side-body { flex: 1; min-height: 0; display: flex; }
.dock {
  flex: none;
  width: 22px;
  height: 73px;
  margin-right: 2px;
  padding-top: 15px;
  border-bottom: 1px solid #85888d;
  background: repeating-linear-gradient(90deg, #85888d 0 2px, transparent 2px 4px) 0 3px / 22px 2px no-repeat;
}
.dock svg { display: block; width: 20px; height: 20px; margin-bottom: 8px; }
.manager {
  flex: 1;
  min-width: 0;
  display: flex;
  flex-direction: column;
  margin-right: 2px;
}
.splitter {
  flex: none;
  display: grid;
  place-items: center;
  height: 16px;
  margin: 2px 0 4px;
  border-top: 1px solid #6a6d72;
  border-bottom: 1px solid #6a6d72;
}
.splitter i {
  width: 6px;
  height: 6px;
  border: 1px solid #85888d;
  border-radius: 50%;
}
.views { flex: none; display: flex; height: 26px; }
.views button {
  display: grid;
  place-items: center;
  width: 40px;
  border: 1px solid #7d8085;
  border-left: 0;
  background: #abadb1;
}
.views button svg { width: 20px; height: 20px; }
.views .on { background: none; border-bottom: 0; }
.views .more {
  width: 16px;
  margin-left: auto;
  border: 0;
  background: none;
}
.views .more svg { width: 12px; height: 14px; }
.filter {
  flex: none;
  display: flex;
  height: 26px;
  margin: 0 1px 0 3px;
  border: 1px solid #b4b6ba;
  background: #eee;
}
.filter button {
  display: flex;
  align-items: center;
}
.filter button svg { width: 20px; height: 20px; }
.filter button::after {
  content: "";
  margin-top: 8px;
  border: 3px solid transparent;
  border-top: 3px solid #333;
  border-bottom: 0;
}
.filter input {
  flex: 1;
  min-width: 0;
  border: 0;
  background: none;
  font: inherit;
}
.scroller { flex: 1; min-height: 0; display: flex; overflow: hidden; }
.tree {
  flex: 1;
  min-width: 0;
  margin: 0;
  padding: 0;
  overflow: hidden;
  list-style: none;
}
.tree li {
  display: flex;
  align-items: center;
  gap: 4px;
  height: 22px;
  padding-left: 26px;
  line-height: 18px;
  white-space: pre;
}
.tree li.root { padding-left: 3px; }
.tree li svg { flex: none; width: 18px; height: 18px; }
.tree li.open { padding-left: 8px; }
.tree li.open::before {
  content: "";
  flex: none;
  width: 5px;
  height: 8px;
  margin-right: 9px;
  border: 4px solid transparent;
  border-left: 5px solid #55585d;
  border-right: 0;
}
.tree .off { color: #94969a; }
.vbar {
  flex: none;
  display: flex;
  flex-direction: column;
  width: 14px;
  border-left: 1px solid #fff;
  background: #f0f0f0;
}
.vbar button, .hbar button {
  flex: none;
  display: grid;
  place-items: center;
  width: 14px;
  height: 17px;
}
.vbar svg, .hbar svg { width: 9px; height: 9px; }
.vbar i { flex: 1; margin-bottom: 91px; background: #cacaca; }
.hbar {
  flex: none;
  display: flex;
  height: 17px;
  padding-right: 16px;
  border-top: 1px solid #fff;
  border-bottom: 1px solid #fff;
  background: #f0f0f0;
}
.hbar button { width: 16px; height: 15px; }
.hbar i { flex: 1; margin-right: 47px; background: #cacaca; }

/* graphics area */
.viewport {
  position: relative;
  flex: 1;
  min-width: 0;
  background: #fff;
}
.model { display: block; width: 100%; height: 100%; }
.model text { font: 11px "Liberation Sans", sans-serif; }
.heads-up {
  position: absolute;
  top: 4px;
  right: 1px;
  display: flex;
}
.heads-up button {
  display: grid;
  place-items: center;
  width: 26px;
  height: 22px;
}
.heads-up svg { width: 19px; height: 19px; }
.heads-up .drop { width: 10px; }
.handle {
  position: absolute;
  top: calc(50% - 20px);
  left: -1px;
  width: 9px;
  height: 40px;
  border: 1px solid #85888d;
  background: #f2f2f2;
}
.handle i {
  display: block;
  width: 5px;
  height: 5px;
  margin: 0 auto;
  border: 1px solid #85888d;
  border-radius: 50%;
}

/* footer */
footer { flex: none; border-top: 1px solid #85888d; }
.sheets {
  display: flex;
  height: 15px;
  margin-left: 25px;
  padding-left: 25px;
  border-left: 1px solid #7fa0ab;
}
.nav { display: flex; }
.nav button {
  display: grid;
  place-items: center;
  width: 16px;
  border: 1px solid #8d9095;
  background: #abadb1;
}
.nav svg {
  width: 10px;
  height: 10px;
  fill: #8d9095;
  stroke: #8d9095;
}
.model-tab, .study-tab { line-height: 14px; }
.model-tab { padding: 0 10px 0 13px; font-weight: 700; }
.study-tab {
  padding: 0 17px 0 9px;
  border: 1px solid #85888d;
  border-top: 0;
  background: #abadb1;
}
.status {
  display: flex;
  height: 16px;
  padding-left: 8px;
}
.slot {
  width: 98px;
  margin-top: 5px;
  border: 1px solid #b4b6ba;
  border-bottom: 0;
  background: #c9cacc;
}
.status svg { width: 20px; height: 12px; margin: 4px 0 0 4px; }
.line { width: 1px; margin-left: 10px; background: #6a6d72; }
```
